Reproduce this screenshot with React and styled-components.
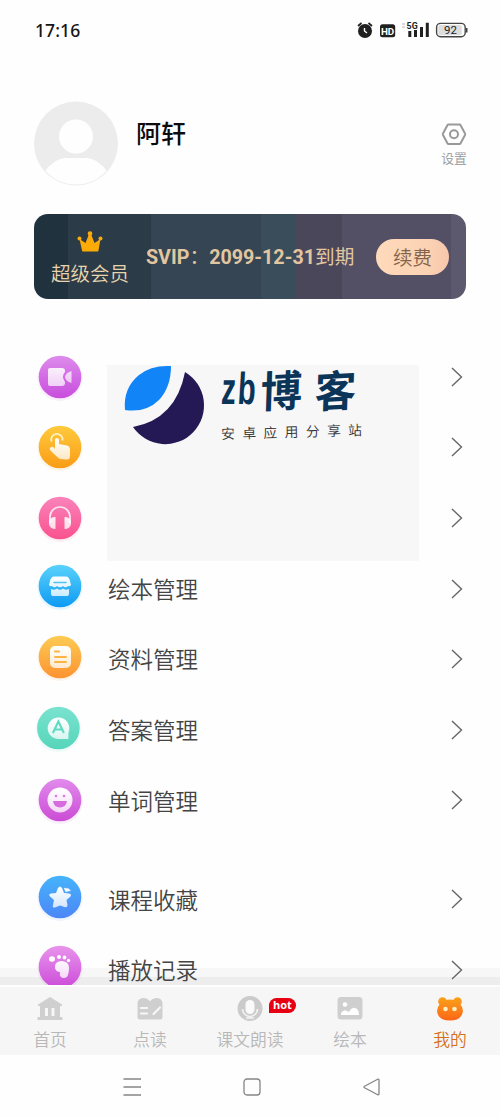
import React from "react";
import styled, { createGlobalStyle } from "styled-components";

const GlobalStyle = createGlobalStyle`
  * { box-sizing: border-box; }
  body { margin: 0; background: #fefefe; font-family: Roboto, "Noto Sans CJK SC", sans-serif; }
  svg { display: block; flex: none; overflow: visible; }
`;

const Screen = styled.main`
  width: 500px;
  height: 1118px;
  overflow: hidden;
  display: flex;
  flex-direction: column;
  background: #fefefe;
`;

const StatusBar = styled.header`
  height: 60px;
  padding: 0 32px 0 35px;
  display: flex;
  align-items: center;
  justify-content: space-between;
`;

const Clock = styled.time`
  font: 500 17.5px/20px "Noto Sans", sans-serif;
  letter-spacing: 0.1px;
  color: #161616;
`;

const StatusIcons = styled.div`
  display: flex;
  align-items: center;
`;

const Profile = styled.section`
  height: 154px;
  padding: 41px 33px 0 34px;
  display: flex;
  align-items: flex-start;
`;

const UserName = styled.h1`
  margin: 16px 0 0 18px;
  flex: 1;
  font-size: 25px;
  line-height: 36px;
  font-weight: 500;
  color: #0c0c0c;
`;

const Settings = styled.button`
  margin: 22px 0 0;
  padding: 0;
  border: 0;
  background: none;
  display: flex;
  flex-direction: column;
  align-items: center;
  gap: 3px;
  font: 350 12.8px/18px "Noto Sans CJK SC", sans-serif;
  color: #959595;
`;

const VipCard = styled.section`
  flex: none;
  width: 432px;
  height: 85px;
  margin: 0 34px;
  padding-left: 17px;
  border-radius: 14px;
  display: flex;
  align-items: center;
  background: linear-gradient(90deg,
    #21323f 0 34px, #2b3b48 34px 117px, #354553 117px 227px,
    #3a4d5a 227px 262px, #4a475b 262px 308px, #534f64 308px 417px, #5c586d 417px);
`;

const VipLevel = styled.div`
  width: 78px;
  height: 85px;
  padding-top: 17px;
  display: flex;
  flex-direction: column;
  align-items: center;
  gap: 6px;
  font: 350 19.5px/28px "Noto Sans CJK SC", sans-serif;
  color: #e8d5ae;
  white-space: nowrap;
`;

const VipExpiry = styled.div`
  width: 247px;
  padding: 3px 0 0 17px;
  font-size: 19.7px;
  line-height: 28px;
  font-weight: 700;
  color: #e2c6a0;
  white-space: nowrap;
`;

const ExpiryUnit = styled.span`
  font-weight: 400;
`;

const RenewButton = styled.button`
  width: 73px;
  height: 36px;
  padding: 0;
  border: 0;
  border-radius: 18px;
  background: linear-gradient(90deg, #ffd9bb, #fbd3b4 70%, #f8c6ab);
  color: #84634b;
  font: 350 19.5px/36px "Noto Sans CJK SC", sans-serif;
`;

const MenuArea = styled.section`
  position: relative;
  height: 686px;
  padding-top: 42.5px;
  overflow: hidden;
  background: linear-gradient(#fefefe 0 669px, #f7f7f7 669px 678px, #ededed 678px);
`;

const MenuGroup = styled.div`
  margin-bottom: ${(p) => p.$gap || 0}px;
`;

const MenuRow = styled.div`
  height: 70.6px;
  padding: 0 37px 0 35px;
  display: flex;
  align-items: center;
`;

const IconSlot = styled.div`
  width: 73px;
  height: 50px;
  margin-top: ${(p) => p.$rise * 2}px;
`;

const MenuLabel = styled.span`
  flex: 1;
  padding-top: 2.5px;
  font-size: 22.5px;
  line-height: 32px;
  font-weight: 350;
  color: #444;
`;

const Banner = styled.aside`
  position: absolute;
  left: 107px;
  top: 66px;
  width: 312px;
  height: 196px;
  padding-left: 18px;
  display: flex;
  align-items: flex-start;
  background: #f7f7f7;
`;

const BannerText = styled.div`
  margin-left: 16px;
  display: flex;
  flex-direction: column;
`;

const Brand = styled.div`
  height: 52px;
  display: flex;
  align-items: flex-start;
  color: #0b3558;
  font: 700 43px/48px "Noto Sans CJK SC", sans-serif;
`;

const BrandLatin = styled.span`
  display: inline-block;
  width: 40px;
  font: italic 700 45px/48px "Liberation Sans", sans-serif;
  letter-spacing: 3px;
  transform: scaleX(0.65) skewX(6deg);
  transform-origin: left center;
`;

const BrandHan = styled.span`
  display: inline-block;
  width: ${(p) => p.$width}px;
  transform: scaleX(0.96) skewX(-5deg) rotate(-3deg);
  transform-origin: left center;
`;

const Tagline = styled.div`
  font: 350 13.8px/20px "Noto Sans CJK SC", sans-serif;
  letter-spacing: 7.4px;
  color: #333;
  white-space: nowrap;
  transform: rotate(-1.6deg);
  margin-top: 3.5px;
`;

const TabBar = styled.nav`
  flex: none;
  height: 70px;
  border-top: 2px solid #fdfdfd;
  display: grid;
  grid-template-columns: repeat(5, 100px);
  background: #f6f6f6;
`;

const Tab = styled.div`
  position: relative;
  padding-top: 8px;
  display: flex;
  flex-direction: column;
  align-items: center;
  gap: 4px;
  font: 350 16.8px/24px "Noto Sans CJK SC", sans-serif;
  color: ${(p) => (p.$active ? "#d4701a" : "#b8b8b8")};
`;

const HotBadge = styled.span`
  position: absolute;
  left: 69px;
  top: 11px;
  width: 27px;
  height: 15px;
  border-radius: 8px 8px 8px 0;
  background: #e60012;
  color: #fff;
  font: 700 11px/14px "Open Sans", sans-serif;
  text-align: center;
`;

const SystemNav = styled.footer`
  height: 63px;
  display: flex;
  align-items: center;
  justify-content: center;
  gap: 102px;
  padding: 0 0 0 4px;
`;

const shades = {
  purple: ["#dd8bec", "#c94ddd"],
  amber: ["#ffca3d", "#f99c16"],
  pink: ["#fa83bb", "#f9528e"],
  sky: ["#5bd2fb", "#0d9af3"],
  orange: ["#fdcb53", "#fc9331"],
  mint: ["#7ae3cf", "#56d5ba"],
  violet: ["#e18bec", "#cb4bd5"],
  blue: ["#45b4fb", "#4c86f7"],
  orchid: ["#e894ec", "#cb4cd8"],
};

function Disc({ shade, shift, children }) {
  const [from, to] = shades[shade];
  return (
    <svg width="50" height="50" viewBox={`${-25 - shift} -25 50 50`}>
      <defs>
        <linearGradient id={shade} x1="0" y1="0" x2="0" y2="1">
          <stop offset="0" stopColor={from} />
          <stop offset="1" stopColor={to} />
        </linearGradient>
        <linearGradient id={shade + "-ink"} gradientUnits="userSpaceOnUse" x1="0" y1="-11" x2="0" y2="12">
          <stop offset="0" stopColor="#fff" />
          <stop offset="1" stopColor="#fff" stopOpacity="0.75" />
        </linearGradient>
      </defs>
      <circle cy="1.5" r="22.5" fill={to} opacity="0.09" />
      <circle r="21.3" fill={`url(#${shade})`} />
      <g fill={`url(#${shade}-ink)`}>{children}</g>
    </svg>
  );
}

const glyphs = {
  purple: (
    <>
      <path d="M-10-9H2Q5-9 5-6V-5Q1-1 5 5V6Q5 9 2 9H-10Q-12 9-12 7V-7Q-12-9-10-9Z" opacity="0.9" />
      <path d="M11.500-6V6Q5.500 4 5 0Q5.500-4 11.500-6Z" opacity="0.8" />
    </>
  ),
  amber: (
    <>
      <path d="M-8.500-5.500A5.700 5.700 0 1 1 2.500-6.500" fill="none" stroke="#fff0c0" strokeWidth="1.800" />
      <path d="M-5-7Q-5-9-3-9T-1-7V-3L7-1.500Q10-1 10 3V9Q10 13 6 12.500L0 12Q-3 10-6 7L-10 3Q-11 1-9 0T-5 2Z" />
    </>
  ),
  pink: (
    <>
      <path d="M-10 5V-1A10 10 0 0 1 10-1V5" fill="none" stroke="#ffe5f0" strokeWidth="1.700" />
      <path d="M-4.500-1V11H-6Q-11 10-11 5T-6-1Z" />
      <path d="M4.500-1V11H6Q11 10 11 5T6-1Z" />
    </>
  ),
  sky: (
    <>
      <path d="M-6-9.500H6Q9-9.500 10-5L11-1Q10 1 8 0Q5.500 2.500 3 0Q0 2.500-3 0Q-5.500 2.500-8 0Q-10 1-11-1L-10-5Q-9-9.500-6-9.500Z" />
      <path d="M-9 3Q-5 4.500-3 2.500Q0 5 3 2.500Q5 4.500 9 3V8Q9 10 7 10H-7Q-9 10-9 8Z" />
      <path d="M-6-3.500H6" stroke="#4fc4f7" strokeWidth="1.600" strokeLinecap="round" />
    </>
  ),
  orange: (
    <>
      <rect x="-10" y="-11" width="21" height="22" rx="5" />
      <path d="M-5-5.500H-1M-5 0H6M-5 5H6" stroke="#fcb443" strokeWidth="2" strokeLinecap="round" />
    </>
  ),
  mint: (
    <>
      <path d="M0-10.500A11 11 0 0 1 10 5V11H0A10.700 10.700 0 0 1 0-10.500Z" />
      <path d="M-5.500 5L0-6.500L5.500 5M-3.700 1.500H3.700" fill="none" stroke="#62dac1" strokeWidth="2.100" />
    </>
  ),
  violet: (
    <>
      <circle r="12.500" />
      <circle cx="-4" cy="-4" r="1.300" fill="#db78e5" />
      <circle cx="4" cy="-4" r="1.300" fill="#db78e5" />
      <path d="M-7 1H7Q6 7.500 0 7.500T-7 1Z" fill="#d66be0" />
    </>
  ),
  blue: (
    <>
      <path d="M-2-9Q0-12 2-9L4-4L9-3.500Q12.500-2.500 10 0L6.500 3L7.500 8.500Q7 11 4.500 10L0 8.500L-5 10.500Q-8 11-7 8L-6 3L-10-.500Q-12-3-9-3.500L-4-4Z" />
      <path d="M3-9.500L5.500-4.500L11.500-6L8.500-9Z" stroke="#449ff7" strokeWidth="0.800" />
    </>
  ),
  orchid: (
    <>
      <ellipse cx="-8" cy="-8" rx="3" ry="2.800" />
      <circle cx="-1" cy="-10" r="2" />
      <circle cx="4.500" cy="-9.500" r="1.900" />
      <circle cx="8.500" cy="-6.500" r="1.700" />
      <path d="M-5 1Q-6-5 1-6Q9-6 9 1Q9 11 4 11T0 5Q-4 5-5 1Z" />
    </>
  ),
};

const mainItems = [
  { shade: "purple", rise: 0 },
  { shade: "amber", rise: -0.5 },
  { shade: "pink", rise: 0 },
  { shade: "sky", rise: -2.2, label: "绘本管理" },
  { shade: "orange", rise: -2, label: "资料管理" },
  { shade: "mint", rise: -2, shift: -1.6, label: "答案管理" },
  { shade: "violet", rise: 0, label: "单词管理" },
];

const historyItems = [
  { shade: "blue", rise: -2.5, label: "课程收藏" },
  { shade: "orchid", rise: -2.5, label: "播放记录" },
];

function MenuItem({ shade, rise, shift = 0, label }) {
  return (
    <MenuRow>
      <IconSlot $rise={rise}>
        <Disc shade={shade} shift={shift}>{glyphs[shade]}</Disc>
      </IconSlot>
      <MenuLabel>{label}</MenuLabel>
      <svg width="12" height="20" viewBox="0 0 12 20" fill="none" stroke="#666" strokeWidth="1.4">
        <path d="M1 1L10.500 10L1 19" />
      </svg>
    </MenuRow>
  );
}

const tabs = [
  {
    label: "首页",
    icon: (
      <>
        <path d="M14 2L26 9.500V11H24V22H26.500V25H1.500V22H4V11H2V9.500Z" fill="#cfcfcf" />
        <path d="M9 13H12V21H9ZM15.500 13H18.500V21H15.500Z" fill="#f7f7f7" />
      </>
    ),
  },
  {
    label: "点读",
    icon: (
      <>
        <path d="M1.500 8Q2 3.500 7 3Q12 3 14 6.500Q16 3 21 3Q26 3.500 26.500 8V22Q26.500 24.500 24 24.500H4Q1.500 24.500 1.500 22Z" fill="#cfcfcf" />
        <path d="M5 13H11M5 18.500H11M17.500 19L24 12.500" fill="none" stroke="#f7f7f7" strokeWidth="2.200" strokeLinecap="round" />
      </>
    ),
  },
  {
    label: "课文朗读",
    hot: true,
    icon: (
      <>
        <circle cx="14" cy="13.500" r="12.500" fill="#cbcbcb" />
        <rect x="9.500" y="5" width="9" height="14" rx="4.500" fill="#fafafa" />
        <path d="M6.500 14A7.500 7.500 0 0 0 21.500 14M10 23H18" fill="none" stroke="#f4f4f4" strokeWidth="1.600" />
      </>
    ),
  },
  {
    label: "绘本",
    icon: (
      <>
        <rect x="1.500" y="2" width="25" height="22.500" rx="3.500" fill="#cfcfcf" />
        <circle cx="9" cy="9.500" r="2.300" fill="#fff" />
        <path d="M5 20V18Q8 14 11 16L13 17Q16 12 19 13Q23 14 23 20Z" fill="#fff" />
      </>
    ),
  },
  {
    label: "我的",
    active: true,
    icon: (
      <>
        <defs>
          <linearGradient id="bear" gradientUnits="userSpaceOnUse" x1="0" y1="2" x2="0" y2="25">
            <stop offset="0" stopColor="#f9a21a" />
            <stop offset="1" stopColor="#fd6717" />
          </linearGradient>
        </defs>
        <g fill="url(#bear)">
          <circle cx="6.500" cy="6.500" r="4.300" />
          <circle cx="21.500" cy="6.500" r="4.300" />
          <path d="M14 4.500Q21 4.500 24 9Q27 12 27 16Q26 25.500 14 25.500T1 16Q1 12 4 9Q7 4.500 14 4.500Z" />
        </g>
        <circle cx="9.500" cy="14" r="2.300" fill="#fff0c4" />
        <circle cx="18.500" cy="14" r="2.300" fill="#fff0c4" />
      </>
    ),
  },
];

export default function App() {
  return (
    <Screen>
      <GlobalStyle />
      <StatusBar>
        <Clock>17:16</Clock>
        <StatusIcons>
          <svg width="111" height="20" viewBox="357 20 111 20">
            <circle cx="365" cy="31" r="7" fill="#202020" />
            <path d="M358 26L361.500 23M368.500 23L372 26" stroke="#202020" strokeWidth="1.700" />
            <path d="M364.500 28V31L367 33" fill="none" stroke="#fff" strokeWidth="1.400" />
            <rect x="380" y="24.300" width="15.200" height="13" rx="2.500" fill="#202020" />
            <text x="387.600" y="34.600" textAnchor="middle" fill="#fff" fontFamily="Roboto" fontWeight="700" fontSize="9.800">HD</text>
            <path d="M402 24H405M402 27H405" stroke="#ccc" strokeWidth="1.300" />
            <text x="406.600" y="28.800" fill="#202020" fontFamily="Roboto" fontWeight="700" fontSize="8.800">5G</text>
            <path d="M409.800 31V37M415.500 30V37M421.500 27V37M427.300 22.700V37" stroke="#202020" strokeWidth="3" />
            <rect x="436.600" y="23.400" width="28.600" height="13.400" rx="4" fill="#fff" stroke="#444" strokeWidth="1.400" />
            <rect x="438.300" y="25" width="23.500" height="10.200" rx="2" fill="#ddd" />
            <path d="M466.700 28V32.500" stroke="#444" strokeWidth="1.600" />
            <text x="450.500" y="34" textAnchor="middle" fill="#222" fontFamily="Roboto" fontWeight="400" fontSize="11.500">92</text>
          </svg>
        </StatusIcons>
      </StatusBar>

      <Profile>
        <svg width="84" height="85" viewBox="0 -0.500 84 85">
          <defs>
            <clipPath id="face"><circle cx="42" cy="42" r="41" /></clipPath>
          </defs>
          <circle cx="42" cy="42" r="42" fill="#ececec" />
          <g clipPath="url(#face)" fill="#fefefe">
            <circle cx="42" cy="35" r="17" />
            <path d="M9 72Q20 57 31 56.500H53Q64 57 75 72L65 90H20Z" />
          </g>
        </svg>
        <UserName>阿轩</UserName>
        <Settings>
          <svg width="26" height="23" viewBox="0 0 26 23" fill="none" stroke="#999" strokeWidth="2">
            <path d="M7.500 1.500H18.500Q19.200 1.500 19.600 2.200L24 10.500Q24.400 11.200 24 12L19.600 20.200Q19.200 21 18.500 21H7.500Q6.800 21 6.400 20.200L2 12Q1.600 11.200 2 10.500L6.400 2.200Q6.800 1.500 7.500 1.500Z" />
            <circle cx="13" cy="11.300" r="4" />
          </svg>
          设置
        </Settings>
      </Profile>

      <VipCard>
        <VipLevel>
          <svg width="26" height="22" viewBox="0 0 26 22" fill="#fbab08">
            <path d="M5 19.500L2.500 8L8.500 12L12 3H14L17.500 12L23.500 8L21.500 19.500Q21.500 20.500 20.500 20.500H6Q5 20.500 5 19.500Z" />
            <circle cx="2.500" cy="7.500" r="2" />
            <circle cx="13" cy="2.500" r="2.300" />
            <circle cx="23.500" cy="7.500" r="2" />
          </svg>
          超级会员
        </VipLevel>
        <VipExpiry>SVIP<ExpiryUnit>：</ExpiryUnit>2099-12-31<ExpiryUnit>到期</ExpiryUnit></VipExpiry>
        <RenewButton>续费</RenewButton>
      </VipCard>

      <MenuArea>
        <MenuGroup $gap={28.3}>
          {mainItems.map((item) => <MenuItem key={item.shade} {...item} />)}
        </MenuGroup>
        <MenuGroup>
          {historyItems.map((item) => <MenuItem key={item.shade} {...item} />)}
        </MenuGroup>
        <Banner>
          <svg width="80" height="80" viewBox="0 0 80 80">
            <path d="M0 45Q-2 23 14 10Q26 0 46 1Q46 22 34 35Q21 48 0 45Z" fill="#1185f8" />
            <path d="M60 7A38.800 38.800 0 1 1 8 62Q51 54 60 7Z" fill="#241955" />
          </svg>
          <BannerText>
            <Brand>
              <BrandLatin>zb</BrandLatin>
              <BrandHan $width={54}>博</BrandHan>
              <BrandHan $width={42}>客</BrandHan>
            </Brand>
            <Tagline>安卓应用分享站</Tagline>
          </BannerText>
        </Banner>
      </MenuArea>

      <TabBar>
        {tabs.map((tab) => (
          <Tab key={tab.label} $active={tab.active}>
            <svg width="28" height="28" viewBox="0 0 28 28">{tab.icon}</svg>
            {tab.label}
            {tab.hot && <HotBadge>hot</HotBadge>}
          </Tab>
        ))}
      </TabBar>

      <SystemNav>
        <svg width="18" height="18" viewBox="0 0 18 18" stroke="#858585" strokeWidth="1.400">
          <path d="M0.500 1H18M0.500 9H18M0.500 17H18" />
        </svg>
        <svg width="18" height="18" viewBox="0 0 18 18" fill="none" stroke="#858585" strokeWidth="1.300">
          <rect x="1" y="1" width="16" height="16" rx="3" />
        </svg>
        <svg width="18" height="18" viewBox="0 0 18 18" fill="none" stroke="#858585" strokeWidth="1.300" strokeLinejoin="round">
          <path d="M1.500 8.300L14.700 1.200Q16 .800 16 2V16Q16 17.200 14.700 16.700L1.500 9.700Q.500 9 1.500 8.300Z" />
        </svg>
      </SystemNav>
    </Screen>
  );
}
